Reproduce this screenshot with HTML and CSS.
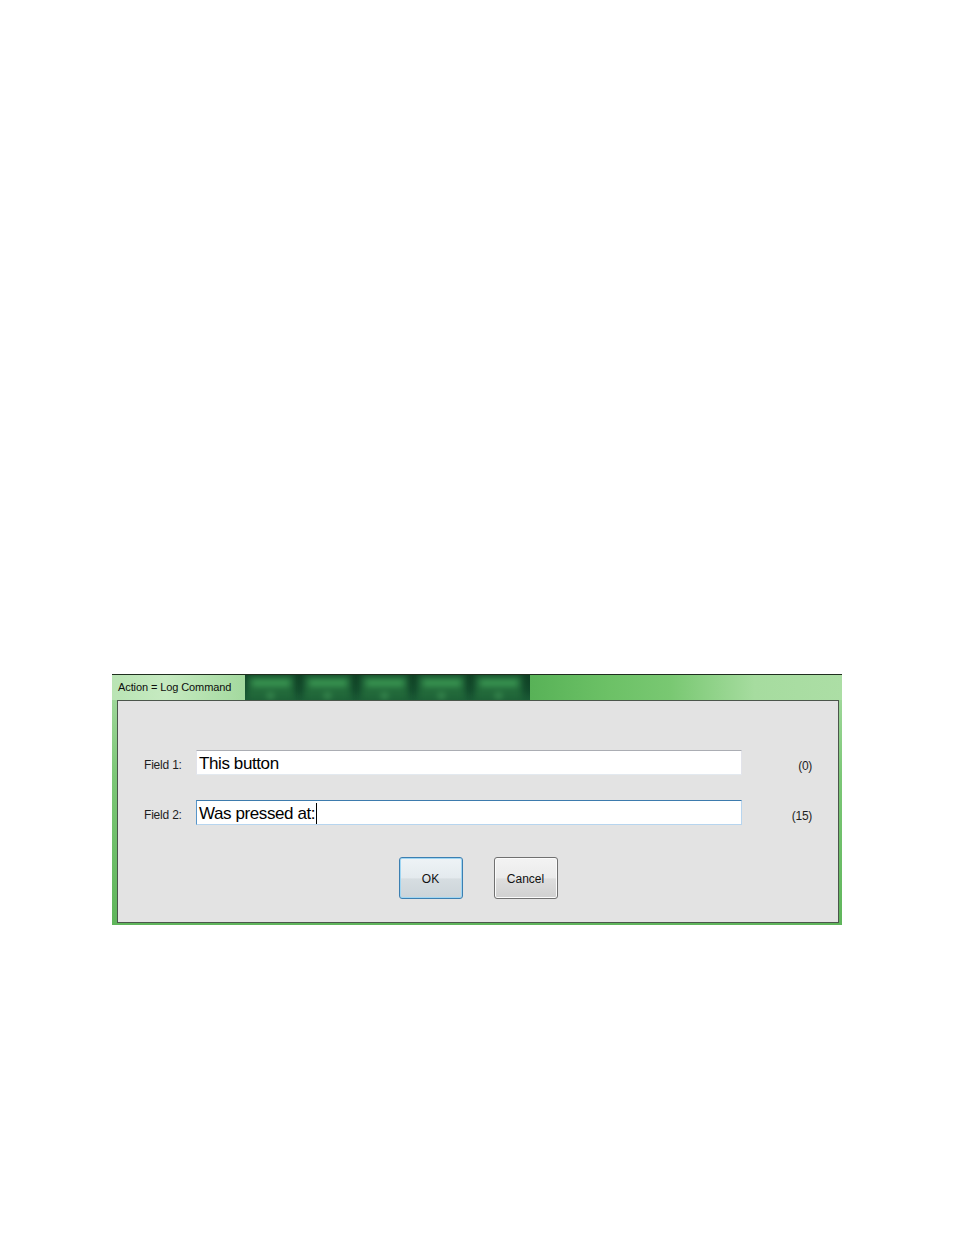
FILE: index.html
```html
<!DOCTYPE html>
<html>
<head>
<meta charset="utf-8">
<title>Action = Log Command</title>
<link rel="stylesheet" href="styles.css">
</head>
<body>
<div class="page">
  <div class="window">
    <div class="titlebar">
      <div class="title">Action = Log Command</div>
      <div class="glass">
        <div class="blk"><span class="bar"></span><span class="dot"></span></div>
        <div class="blk"><span class="bar"></span><span class="dot"></span></div>
        <div class="blk"><span class="bar"></span><span class="dot"></span></div>
        <div class="blk"><span class="bar"></span><span class="dot"></span></div>
        <div class="blk"><span class="bar"></span><span class="dot"></span></div>
      </div>
      <div class="tail"></div>
    </div>
    <div class="panel">
      <div class="row">
        <div class="label">Field 1:</div>
        <div class="textbox">This button</div>
        <div class="count">(0)</div>
      </div>
      <div class="row row2">
        <div class="label">Field 2:</div>
        <div class="textbox focused">Was pressed at:<span class="caret"></span></div>
        <div class="count">(15)</div>
      </div>
      <div class="buttons">
        <div class="btn default">OK</div>
        <div class="btn">Cancel</div>
      </div>
    </div>
  </div>
</div>
</body>
</html>
```
FILE: styles.css
```css
html, body {
  margin: 0;
  padding: 0;
  background: #ffffff;
}
body {
  font-family: "Liberation Sans", Arial, sans-serif;
}
.page {
  padding: 674px 0 0 112px;
}
.window {
  width: 730px;
  height: 251px;
  box-sizing: border-box;
  border-top: 1px solid #1f2f1f;
  display: flex;
  flex-direction: column;
  background: linear-gradient(to bottom, #a9dca4 0%, #7cc777 40%, #5fb55b 100%);
}
.titlebar {
  height: 25px;
  display: flex;
  flex: none;
}
.title {
  width: 133px;
  box-sizing: border-box;
  padding: 6px 0 0 6px;
  font-size: 11px;
  letter-spacing: -0.1px;
  color: #0d0d0d;
  white-space: nowrap;
  background: linear-gradient(to right, #b9e4b4 0%, #c6eac1 40%, #a3d99e 100%);
}
.glass {
  width: 285px;
  display: flex;
  gap: 10px;
  padding: 0 2px 0 2px;
  box-sizing: border-box;
  background: linear-gradient(to bottom, #0f3f24 0%, #124a2b 60%, #1a5a35 100%);
  overflow: hidden;
}
.blk {
  width: 47px;
  height: 25px;
  display: flex;
  flex-direction: column;
  align-items: center;
  justify-content: space-between;
  background: #22693a;
  filter: blur(3px);
}
.blk .bar {
  width: 38px;
  height: 6px;
  margin-top: 5px;
  background: #3d9d55;
}
.blk .dot {
  width: 5px;
  height: 4px;
  margin-bottom: 2px;
  background: #55b268;
}
.tail {
  flex: 1;
  background: linear-gradient(to right, #58b257 0%, #6cc166 25%, #79c872 45%, #a6dc9f 72%, #acdea5 100%);
}
.panel {
  flex: 1;
  margin: 0 3px 2px 5px;
  border: 1px solid #4b564b;
  background: #e3e3e3;
  padding-top: 49px;
  box-sizing: border-box;
}
.row {
  display: flex;
  align-items: center;
  height: 25px;
  padding-left: 26px;
}
.row2 {
  margin-top: 25px;
}
.label {
  width: 52px;
  font-size: 12px;
  letter-spacing: -0.2px;
  color: #1e1e1e;
  padding-top: 5px;
}
.textbox {
  width: 546px;
  height: 25px;
  box-sizing: border-box;
  background: #ffffff;
  border: 1px solid #e2e3ea;
  border-top-color: #abadb3;
  border-bottom-color: #e3e9ef;
  font-size: 17px;
  letter-spacing: -0.4px;
  line-height: 21px;
  padding-left: 2px;
  padding-top: 1px;
  color: #000;
  display: flex;
  align-items: center;
  white-space: nowrap;
}
.textbox.focused {
  border-color: #5795c9;
  border-top-color: #3d7bad;
  border-bottom-color: #b7d5ef;
  border-right-color: #b7d5ef;
}
.caret {
  display: inline-block;
  width: 0;
  height: 21px;
  border-left: 1px solid #000;
  margin-left: 1px;
}
.count {
  width: 70px;
  text-align: right;
  font-size: 12px;
  letter-spacing: -0.3px;
  color: #1e1e1e;
  padding-top: 6px;
}
.buttons {
  display: flex;
  justify-content: center;
  gap: 31px;
  margin-top: 32px;
}
.btn {
  width: 64px;
  height: 42px;
  box-sizing: border-box;
  border: 1px solid #707070;
  border-radius: 3px;
  background: linear-gradient(to bottom, #f3f3f3 0%, #ebebeb 50%, #dedede 52%, #d0d0d0 100%);
  box-shadow: inset 0 0 0 1px #fbfbfb;
  display: flex;
  align-items: center;
  justify-content: center;
  font-size: 12px;
  color: #111;
  padding-top: 1px;
}
.btn.default {
  border-color: #3c7fb1;
  box-shadow: inset 0 0 0 1px #9fd6f3;
  background: linear-gradient(to bottom, #eef3f6 0%, #e4eaee 50%, #d6dde1 52%, #ccd4d9 100%);
}
```
